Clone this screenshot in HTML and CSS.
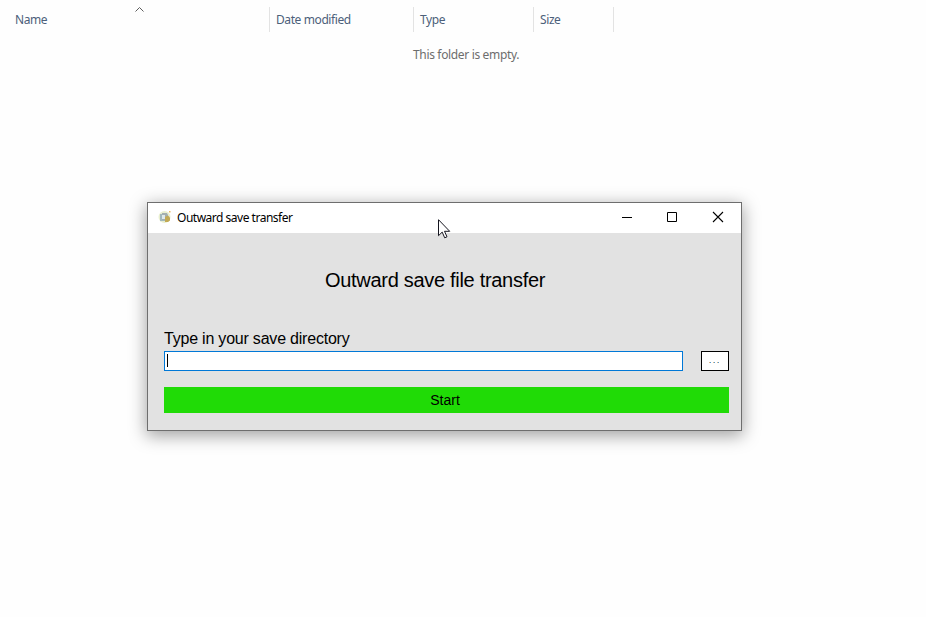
FILE: index.html
```html
<!DOCTYPE html>
<html lang="en">
<head>
<meta charset="utf-8">
<title>Outward save transfer</title>
<link rel="stylesheet" href="styles.css">
</head>
<body>
<main class="explorer">
  <header class="columns">
    <div class="column column-name">Name
      <svg class="sort" width="9" height="5" viewBox="0 0 9 5"><path d="M.5 4.500l4-4 4 4" fill="none" stroke="#5c5c5c"/></svg>
    </div>
    <div class="column column-date">Date modified</div>
    <div class="column column-type">Type</div>
    <div class="column column-size">Size</div>
  </header>
  <p class="empty">This folder is empty.</p>
</main>
<section class="window">
  <div class="titlebar">
    <svg class="app-icon" width="14" height="14" viewBox="0 0 14 14">
      <circle cx="6.500" cy="7" r="6" fill="#e9efcf"/>
      <path d="M2 4h5v7H2z" fill="#a3b9bc"/>
      <path d="M4 3h5l1 2v5H4z" fill="#a3afb0"/>
      <path d="M4 5h3v4H4z" fill="#dfe9ea"/>
      <path d="M7 7l3-1.500 2 2v3l-2 1.500H7z" fill="#c2aa55"/>
      <path d="M11 1h1.500v1.500H11z" fill="#e8b765"/>
    </svg>
    <span class="title">Outward save transfer</span>
    <div class="controls">
      <svg width="46" height="29" viewBox="0 0 46 29"><path d="M18 14.500h10" stroke="#000"/></svg>
      <svg width="45" height="29" viewBox="0 0 45 29"><path d="M17.500 9.500h9v9h-9z" fill="none" stroke="#000"/></svg>
      <svg width="46" height="29" viewBox="0 0 46 29"><path d="M18 9l10 10M28 9L18 19" fill="none" stroke="#000" stroke-width="1.100"/></svg>
    </div>
  </div>
  <div class="content">
    <h1 class="heading">Outward save file transfer</h1>
    <label class="label" for="directory">Type in your save directory</label>
    <div class="row">
      <div class="field" id="directory"><span class="caret"></span></div>
      <button class="browse" aria-label="Browse"><i></i><i></i><i></i></button>
    </div>
    <button class="start">Start</button>
  </div>
</section>
<svg class="cursor" width="13" height="20" viewBox="0 0 13 20"><path d="M.5.700v16l3.700-3.600 2.500 5.700 2.300-1-2.500-5.500h5.200z" fill="#fff" stroke="#15151f"/></svg>
</body>
</html>
```
FILE: styles.css
```css
* { box-sizing: border-box; }

body {
  margin: 0;
  width: 926px;
  height: 617px;
  overflow: hidden;
  position: relative;
  background: #fefefe;
  font-family: "Noto Sans", sans-serif;
  font-size: 12px;
}

.columns {
  display: flex;
  padding-top: 7px;
}

.column {
  height: 25px;
  padding-left: 6px;
  border-right: 1px solid #e3e3e3;
  line-height: 25px;
  letter-spacing: -.4px;
  color: #4c607a;
  white-space: nowrap;
}

.column-name { width: 270px; padding-left: 15px; position: relative; }
.column-date { width: 144px; }
.column-type { width: 120px; }
.column-size { width: 80px; letter-spacing: -.4px; }

.sort { position: absolute; left: 135px; top: 0; }

.empty {
  margin: 14px 0 0 413px;
  line-height: 18px;
  letter-spacing: -.34px;
  color: #6d6d6d;
  white-space: nowrap;
}

.window {
  position: absolute;
  left: 147px;
  top: 202px;
  width: 595px;
  height: 229px;
  border: 1px solid #6e6e6e;
  background: #e2e2e2;
  box-shadow: 0 4px 16px 1px rgba(0, 0, 0, .36);
}

.titlebar {
  display: flex;
  align-items: center;
  height: 30px;
  padding: 0 0 2px 10px;
  background: #fff;
}

.title {
  margin-left: 5px;
  letter-spacing: -.49px;
  color: #000;
  white-space: nowrap;
}

.controls { display: flex; margin-left: auto; }

.content {
  padding: 0 12px 0 16px;
  font-family: "Liberation Sans", sans-serif;
  color: #000;
}

.heading {
  margin: 0;
  padding: 36px 0 0 161px;
  font-size: 20px;
  font-weight: 400;
  line-height: 22px;
  letter-spacing: -.3px;
  white-space: nowrap;
}

.label {
  display: block;
  margin-top: 38px;
  font-size: 16px;
  line-height: 20px;
  letter-spacing: -.21px;
  white-space: nowrap;
}

.row {
  display: flex;
  justify-content: space-between;
  margin-top: 2px;
}

.field {
  width: 519px;
  height: 20px;
  padding: 2px;
  border: 1px solid #0078d7;
  background: #fff;
}

.caret { display: block; width: 1px; height: 13px; background: #000; }

.browse {
  display: flex;
  gap: 2px;
  width: 28px;
  height: 20px;
  padding: 10px 0 0 7px;
  border: 1px solid #000;
  background: #fff;
}

.browse i {
  width: 2px;
  height: 1px;
  background: linear-gradient(90deg, #d9b78a 50%, #579bd0 50%);
}

.start {
  display: block;
  width: 565px;
  height: 26px;
  margin-top: 16px;
  padding: 0 3px 0 0;
  border: 0;
  background: #20db06;
  color: #000;
  font: 14px/26px "Liberation Sans", sans-serif;
}

.cursor { position: absolute; left: 438px; top: 219px; }
```
